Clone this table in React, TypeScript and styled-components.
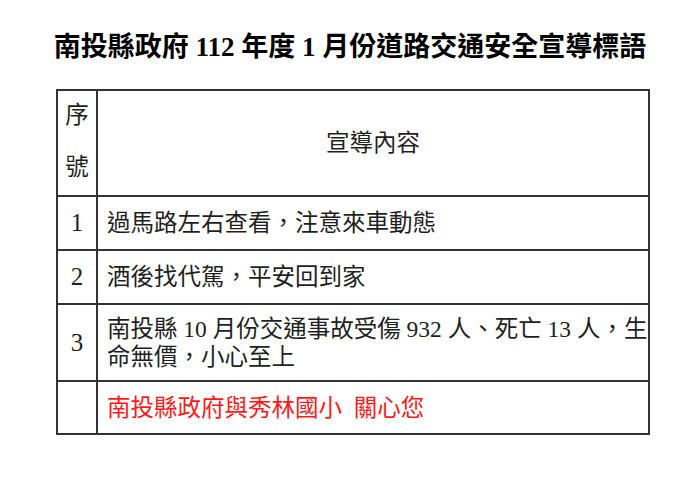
import styled, { createGlobalStyle } from 'styled-components'

const GlobalStyle = createGlobalStyle`
  html, body {
    margin: 0;
    padding: 0;
    background: #ffffff;
  }
  body {
    font-family: "Liberation Serif", "Noto Sans CJK TC", serif;
    color: #111;
  }
`

const Page = styled.div`
  width: 700px;
  height: 478px;
  padding-top: 31px;
  box-sizing: border-box;
  display: flex;
  flex-direction: column;
  align-items: center;
`

const Title = styled.h1`
  margin: 0 0 26px;
  font-family: "Liberation Serif", "Noto Sans CJK TC", serif;
  font-size: 27px;
  line-height: 32px;
  font-weight: 700;
  color: #000;
  white-space: nowrap;
`

const Table = styled.div`
  width: 594px;
  margin-left: 6px;
  box-sizing: border-box;
  display: grid;
  grid-template-columns: 38px 1fr;
  grid-template-rows: 104px 52px 52px 75px 51px;
  gap: 2px;
  padding: 2px;
  background: #333;
`

// content cell; $center is used by the number column
const Cell = styled.div<{ $center?: boolean }>`
  background: #fff;
  display: flex;
  align-items: center;
  justify-content: ${(p) => (p.$center ? 'center' : 'flex-start')};
  padding: ${(p) => (p.$center ? '0' : '0 0 0 9px')};
  font-size: ${(p) => (p.$center ? '25px' : '23.5px')};
  line-height: 28px;
  color: #1f1f1f;
`

const HeadCell = styled(Cell)`
  font-size: 23.5px;
`

const NumHead = styled(HeadCell)`
  flex-direction: column;
  line-height: 52px;
  padding-bottom: 4px;
  box-sizing: border-box;
`

const Text = styled.span<{ $red?: boolean }>`
  color: ${(p) => (p.$red ? '#ff1a1a' : 'inherit')};
  white-space: nowrap;
`

export default function App() {
  return (
    <Page>
      <GlobalStyle />
      <Title>南投縣政府 112 年度 1 月份道路交通安全宣導標語</Title>
      <Table>
        <NumHead $center>
          <span>序</span>
          <span>號</span>
        </NumHead>
        <HeadCell $center>宣導內容</HeadCell>

        <Cell $center>1</Cell>
        <Cell>
          <Text>過馬路左右查看，注意來車動態</Text>
        </Cell>

        <Cell $center>2</Cell>
        <Cell>
          <Text>酒後找代駕，平安回到家</Text>
        </Cell>

        <Cell $center>3</Cell>
        <Cell>
          <Text>
            南投縣 10 月份交通事故受傷 932 人、死亡 13 人，生
            <br />
            命無價，小心至上
          </Text>
        </Cell>

        <Cell $center />
        <Cell>
          <Text $red>南投縣政府與秀林國小&nbsp;&nbsp;關心您</Text>
        </Cell>
      </Table>
    </Page>
  )
}
